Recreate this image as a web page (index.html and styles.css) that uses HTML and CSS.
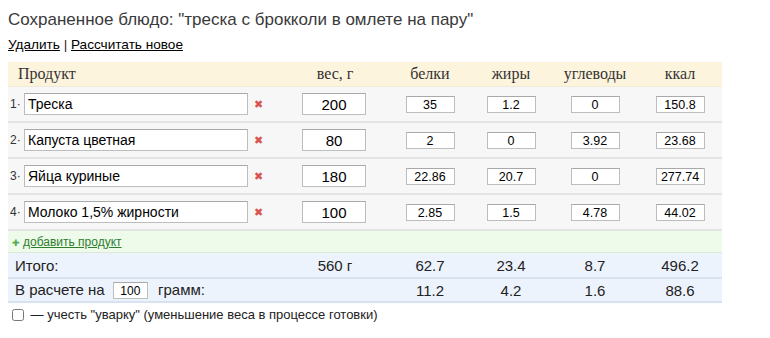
FILE: index.html
```html
<!DOCTYPE html>
<html lang="ru">
<head>
    <meta charset="UTF-8">
    <title>Сохраненное блюдо</title>
    <link rel="stylesheet" href="styles.css">
</head>
<body>
    <h1>Сохраненное блюдо: "треска с брокколи в омлете на пару"</h1>
    <div class="actions">
        <a href="#">Удалить</a> | <a href="#">Рассчитать новое</a>
    </div>

    <table class="calc">
        <colgroup>
            <col class="c-prod">
            <col class="c-weight">
            <col class="c-prot">
            <col class="c-fat">
            <col class="c-carb">
            <col class="c-kcal">
        </colgroup>
        <thead>
            <tr>
                <th class="th-prod">Продукт</th>
                <th>вес, г</th>
                <th>белки</th>
                <th>жиры</th>
                <th>углеводы</th>
                <th>ккал</th>
            </tr>
        </thead>
        <tbody>
            <tr class="item">
                <td class="prod"><span class="num">1·</span><input class="name" type="text" value="Треска"><span class="del">✖</span></td>
                <td><input class="weight" type="text" value="200"></td>
                <td><input class="val" type="text" value="35"></td>
                <td><input class="val" type="text" value="1.2"></td>
                <td><input class="val" type="text" value="0"></td>
                <td><input class="val" type="text" value="150.8"></td>
            </tr>
            <tr class="item">
                <td class="prod"><span class="num">2·</span><input class="name" type="text" value="Капуста цветная"><span class="del">✖</span></td>
                <td><input class="weight" type="text" value="80"></td>
                <td><input class="val" type="text" value="2"></td>
                <td><input class="val" type="text" value="0"></td>
                <td><input class="val" type="text" value="3.92"></td>
                <td><input class="val" type="text" value="23.68"></td>
            </tr>
            <tr class="item">
                <td class="prod"><span class="num">3·</span><input class="name" type="text" value="Яйца куриные"><span class="del">✖</span></td>
                <td><input class="weight" type="text" value="180"></td>
                <td><input class="val" type="text" value="22.86"></td>
                <td><input class="val" type="text" value="20.7"></td>
                <td><input class="val" type="text" value="0"></td>
                <td><input class="val" type="text" value="277.74"></td>
            </tr>
            <tr class="item">
                <td class="prod"><span class="num">4·</span><input class="name" type="text" value="Молоко 1,5% жирности"><span class="del">✖</span></td>
                <td><input class="weight" type="text" value="100"></td>
                <td><input class="val" type="text" value="2.85"></td>
                <td><input class="val" type="text" value="1.5"></td>
                <td><input class="val" type="text" value="4.78"></td>
                <td><input class="val" type="text" value="44.02"></td>
            </tr>
            <tr class="add">
                <td colspan="6"><span class="plus">✚</span><a href="#">добавить продукт</a></td>
            </tr>
            <tr class="total">
                <td class="label">Итого:</td>
                <td>560 г</td>
                <td>62.7</td>
                <td>23.4</td>
                <td>8.7</td>
                <td>496.2</td>
            </tr>
            <tr class="total">
                <td class="label">В расчете на <input class="per" type="text" value="100"> грамм:</td>
                <td></td>
                <td>11.2</td>
                <td>4.2</td>
                <td>1.6</td>
                <td>88.6</td>
            </tr>
        </tbody>
    </table>

    <label class="boil"><input type="checkbox"> — учесть "уварку" (уменьшение веса в процессе готовки)</label>
</body>
</html>
```

FILE: styles.css
```css
body {
    margin: 8px;
    font-family: "Liberation Sans", Arial, sans-serif;
    color: #222;
    background: #fff;
}
h1 {
    margin: 0;
    padding-top: 1px;
    font-size: 17px;
    font-weight: normal;
    color: #3a3a3a;
    line-height: 22px;
}
.actions {
    margin-top: 6px;
    font-size: 13.6px;
    line-height: 16px;
}
.actions a {
    color: #000;
}
.calc {
    margin-top: 9px;
    width: 714px;
    border-collapse: collapse;
    table-layout: fixed;
}
.c-prod { width: 272px; }
.c-weight { width: 110px; }
.c-prot { width: 80px; }
.c-fat { width: 82px; }
.c-carb { width: 86px; }
.c-kcal { width: 84px; }
.calc th {
    height: 24px;
    padding: 0;
    background: #fdf4dd;
    font-family: "Liberation Serif", "Times New Roman", serif;
    font-size: 16px;
    font-weight: normal;
    color: #333;
    text-align: center;
    border-bottom: 1px solid #f0ead8;
}
.calc .th-prod {
    text-align: left;
    padding-left: 10px;
}
.calc td {
    padding: 0;
    text-align: center;
}
.item td {
    height: 34px;
    background: #f7f7f7;
    border-bottom: 2px solid #e4e4e4;
}
.prod {
    text-align: left !important;
    white-space: nowrap;
}
.num {
    display: inline-block;
    width: 14px;
    padding-left: 2px;
    font-size: 12px;
    color: #333;
}
input[type="text"] {
    font-family: "Liberation Sans", Arial, sans-serif;
    color: #000;
    background: #fff;
    border: 1px solid #bdbdbd;
    border-top-color: #a9a9a9;
    padding: 0 3px;
    margin: 0;
    vertical-align: middle;
}
.name {
    width: 216px;
    height: 20px;
    font-size: 14px;
}
.del {
    display: inline-block;
    margin-left: 6px;
    font-size: 11px;
    color: #d9534f;
    vertical-align: middle;
}
.weight {
    width: 56px;
    height: 20px;
    font-size: 15px;
    text-align: center;
    margin-left: -2px !important;
}
.val {
    width: 41px;
    height: 15px;
    font-size: 12.5px;
    text-align: center;
}
.add td {
    height: 21px;
    background: #eefbea;
    text-align: left;
    font-size: 12px;
    padding-left: 4px;
    border-bottom: 1px solid #dfe9d9;
}
.add a {
    color: #2f7d2f;
}
.plus {
    color: #4caf50;
    font-size: 9px;
    margin-right: 3px;
}
.total td {
    height: 24px;
    background: #edf3fd;
    font-size: 15px;
    color: #222;
    border-bottom: 2px solid #d9e3f0;
}
.total + .total td {
    height: 22px;
}
.total .label {
    text-align: left;
    padding-left: 7px;
}
.per {
    width: 27px;
    height: 15px;
    font-size: 12px;
    text-align: center;
    margin: 0 6px 0 4px !important;
}
.boil {
    display: block;
    margin-top: 4px;
    padding-left: 4px;
    font-size: 13px;
    color: #222;
}
.boil input {
    width: 12px;
    height: 12px;
    margin: 0 3px 0 0;
    vertical-align: -2px;
}
```
